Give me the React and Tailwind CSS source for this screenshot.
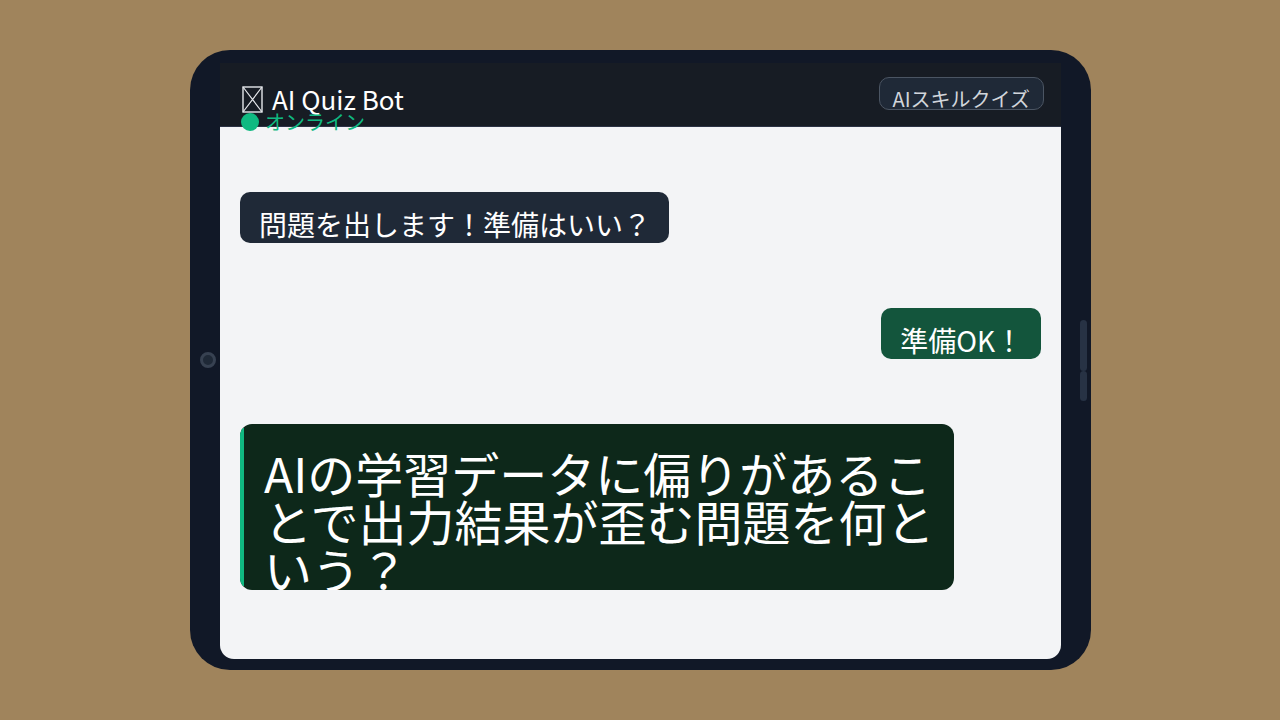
export default function App() {
  const font = { fontFamily: '"Noto Sans CJK JP", "Noto Sans", sans-serif' };
  return (
    <div className="flex h-[720px] w-[1280px] bg-[#a0845c] pt-[50px] pl-[190px]" style={font}>
      {/* tablet body */}
      <div className="relative flex h-[620px] w-[901px] flex-col rounded-[40px] bg-[#111827] px-[30px] pt-[13px] pb-[11px]">
        <div className="absolute left-[10px] top-[302px] h-[16px] w-[16px] rounded-full border-[3px] border-[#374151] bg-[#1f2937]" />
        <div className="absolute right-[4px] top-[270px] h-[51px] w-[7px] rounded-full bg-[#273244]" />
        <div className="absolute right-[4px] top-[321px] h-[30px] w-[7px] rounded-full bg-[#273244]" />

        {/* screen */}
        <div className="flex flex-1 flex-col rounded-b-[14px] bg-[#f3f4f6]">
          <header className="relative z-10 flex h-[64px] items-start justify-between border-b border-[#2b3244] bg-[#171c24] pl-[22px] pr-[17px] pt-[22px]">
            <div className="flex flex-col">
              <div className="flex items-center gap-[9px] text-[26px] leading-none text-white">
                <svg width="21" height="27" viewBox="0 0 21 27" className="mt-[1px]">
                  <rect x="1" y="1" width="19" height="25" fill="none" stroke="#e5e7eb" strokeWidth="1.4" />
                  <path d="M1 1 L20 26 M20 1 L1 26" stroke="#e5e7eb" strokeWidth="1.2" />
                </svg>
                <span>AI Quiz Bot</span>
              </div>
              <div className="ml-[-1px] mt-[-1px] flex items-center gap-[6px] text-[20px] leading-[20px] text-[#10b981]">
                <span className="h-[18px] w-[18px] rounded-full bg-[#10b981]" />
                <span>オンライン</span>
              </div>
            </div>
            <div className="mt-[-8px] h-[33px] rounded-[10px] border border-[#4b5563] bg-[#1f2937] px-[13px] pt-[10px] text-[20px] leading-[22px] text-[#d1d5db]">
              AIスキルクイズ
            </div>
          </header>

          <main className="flex flex-col gap-[65px] px-[20px] pt-[65px]">
            <div className="flex">
              <div className="h-[51px] overflow-hidden rounded-[10px] bg-[#1f2937] pl-[19px] pr-[18px] pt-[12px] text-[28px] leading-[40px] text-white">
                問題を出します！準備はいい？
              </div>
            </div>
            <div className="flex justify-end">
              <div className="h-[51px] overflow-hidden rounded-[10px] bg-[#13553c] pl-[19px] pr-[18px] pt-[12px] text-[28px] leading-[40px] text-white">
                準備OK！
              </div>
            </div>
            <div className="flex">
              <div className="h-[166px] w-[714px] overflow-hidden rounded-[12px] bg-[#0d281a] py-[4px]">
                <div className="h-full border-l-[4px] border-[#10b981] pl-[20px] pr-[14px] pt-[20px] text-[48px] leading-[48px] text-white">
                  AIの学習データに偏りがあることで出力結果が歪む問題を何という？
                </div>
              </div>
            </div>
          </main>
        </div>
      </div>
    </div>
  );
}
